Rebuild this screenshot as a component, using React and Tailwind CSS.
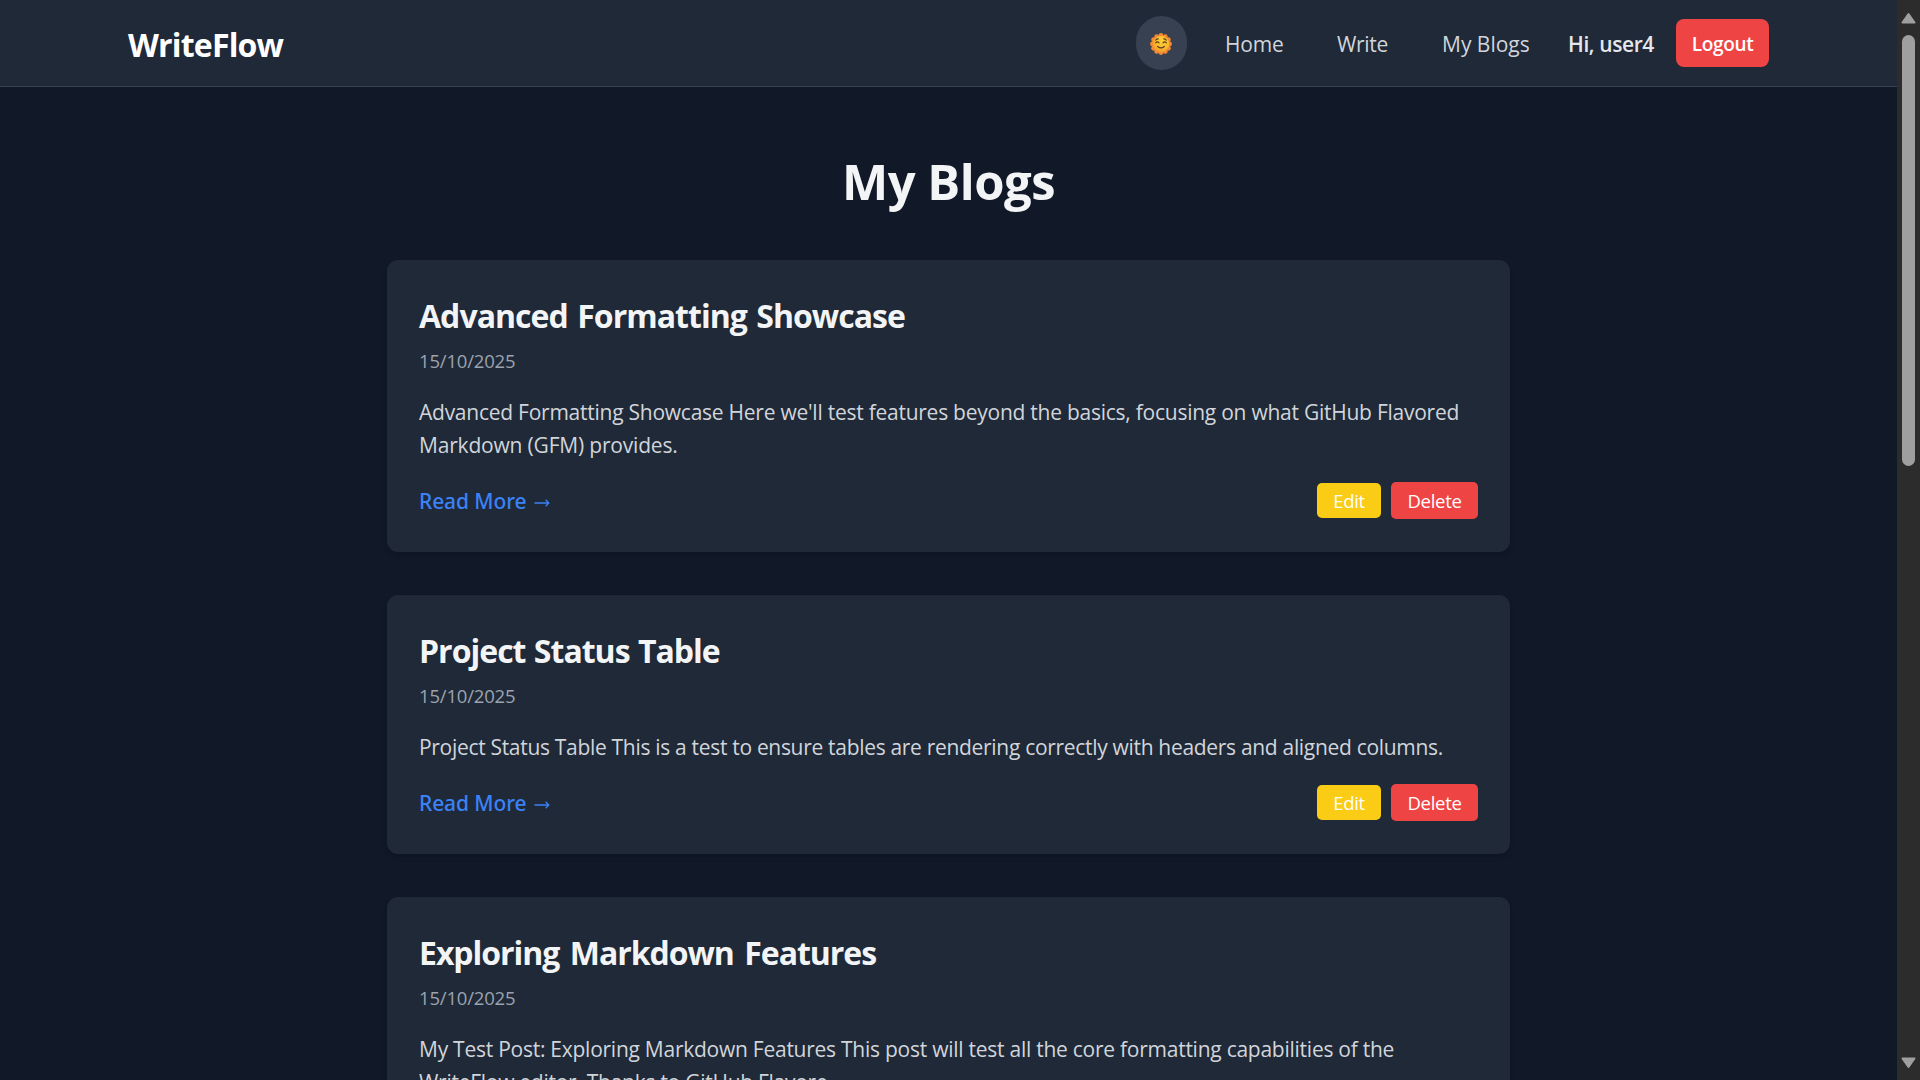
const posts = [
  {
    title: "Advanced Formatting Showcase",
    titleClass: "tracking-[-0.96px] [word-spacing:2px]",
    date: "15/10/2025",
    lines: [
      {
        text: "Advanced Formatting Showcase Here we'll test features beyond the basics, focusing on what GitHub Flavored",
        cls: "tracking-[-0.249px]",
      },
      { text: "Markdown (GFM) provides.", cls: "tracking-[-0.19px]" },
    ],
  },
  {
    title: "Project Status Table",
    titleClass: "tracking-[-0.99px] [word-spacing:1px]",
    date: "15/10/2025",
    lines: [
      {
        text: "Project Status Table This is a test to ensure tables are rendering correctly with headers and aligned columns.",
        cls: "tracking-[-0.31px]",
      },
    ],
  },
  {
    title: "Exploring Markdown Features",
    titleClass: "tracking-[-1.04px] [word-spacing:3.2px]",
    date: "15/10/2025",
    lines: [
      {
        text: "My Test Post: Exploring Markdown Features This post will test all the core formatting capabilities of the",
        cls: "tracking-[-0.254px]",
      },
      { text: "WriteFlow editor. Thanks to GitHub Flavore...", cls: "tracking-[-0.27px]" },
    ],
  },
];

const petals = Array.from({ length: 12 }, (_, i) => {
  const a = (i * Math.PI) / 6;
  return [16 + 12.4 * Math.cos(a), 16 + 12.4 * Math.sin(a)];
});

function SunIcon() {
  return (
    <svg viewBox="0 0 32 32" className="h-[22px] w-[22px]" aria-hidden="true">
      <defs>
        <radialGradient id="sunFace" cx="0.6" cy="0.3" r="0.75">
          <stop offset="0" stopColor="#ffd43a" />
          <stop offset="0.6" stopColor="#f9bb2c" />
          <stop offset="1" stopColor="#ee9a2c" />
        </radialGradient>
      </defs>
      <g fill="#f58a32">
        <circle cx="16" cy="16" r="13.2" />
        {petals.map(([x, y]) => (
          <circle key={`${x}-${y}`} cx={x} cy={y} r="3.5" />
        ))}
      </g>
      <circle cx="16" cy="16" r="11.8" fill="url(#sunFace)" />
      <g fill="none" stroke="#5c3d22" strokeWidth="1.7" strokeLinecap="round">
        <path d="M8.3 10.3 Q9.8 8.4 12 8.6" />
        <path d="M20 8.6 Q22.2 8.4 23.7 10.3" />
        <path d="M8.2 14.4 Q10.7 11.6 13.2 14.4" />
        <path d="M18.8 14.4 Q21.3 11.6 23.8 14.4" />
        <path d="M11.2 19.6 Q16 23.8 20.8 19.6" />
      </g>
    </svg>
  );
}

function Header() {
  return (
    <header className="flex h-[87px] shrink-0 items-center justify-between border-b border-[#374151] bg-[#1f2937] px-32">
      <span className="pt-[4px] text-[32px] leading-[44px] font-bold tracking-[-0.82px] whitespace-nowrap text-white">
        WriteFlow
      </span>
      <nav className="flex items-center text-[21px] leading-[33px] whitespace-nowrap text-[#d1d5db]">
        <button className="mr-[38px] flex h-[54px] w-[51px] items-center justify-center rounded-full bg-[#374151]">
          <span className="pt-[2px] pr-px">
            <SunIcon />
          </span>
        </button>
        <a className="w-[112px] pt-[2px] tracking-[-0.15px]">Home</a>
        <a className="w-[105px] pt-[2px] tracking-[-0.31px]">Write</a>
        <a className="w-[126px] pt-[2px]">My Blogs</a>
        <span className="w-[108px] pt-[2px] font-semibold tracking-[-0.4px] text-[#e5e7eb]">
          Hi, user4
        </span>
        <button className="h-[48px] w-[93px] rounded-lg bg-[#ef4444] pt-[3px] text-[19px] font-semibold tracking-[-0.32px] text-white">
          Logout
        </button>
      </nav>
    </header>
  );
}

function PostCard({ post }) {
  return (
    <article className="rounded-[11px] bg-[#1f2937] px-8 pt-[34px] pb-[33px] shadow-md">
      <h2 className={`text-[32px] leading-[44px] font-bold whitespace-nowrap text-[#f3f4f6] ${post.titleClass}`}>
        {post.title}
      </h2>
      <div className="mt-[9px] text-[18.5px] leading-[28px] tracking-[-0.18px] text-[#9ca3af]">
        {post.date}
      </div>
      <p className="mt-[21px] text-[21px] leading-[33px] whitespace-nowrap text-[#d1d5db]">
        {post.lines.map((line) => (
          <span key={line.text} className={`block ${line.cls}`}>
            {line.text}
          </span>
        ))}
      </p>
      <div className="mt-[20px] flex h-[37px] items-center justify-between">
        <a className="flex items-center pt-[2px] font-['Noto_Sans',sans-serif] text-[21px] leading-[33px] font-medium tracking-[-0.11px] text-[#3b82f6]">
          Read More
          <svg viewBox="0 0 16 10" className="mt-[3px] ml-[8px] h-[10px] w-[16px]" aria-hidden="true">
            <path d="M0.5 5H14.5M11.6 1.8L14.8 5L11.6 8.2" fill="none" stroke="#3b82f6" strokeWidth="1.3" />
          </svg>
        </a>
        <div className="flex items-center gap-[10px] text-[18.5px] leading-[28px] tracking-[-0.3px] text-white">
          <button className="h-[35px] w-[64px] rounded-[5px] bg-[#facc15]">Edit</button>
          <button className="h-[37px] w-[87px] rounded-[5px] bg-[#ef4444]">Delete</button>
        </div>
      </div>
    </article>
  );
}

function Scrollbar() {
  return (
    <div className="flex w-[23px] shrink-0 flex-col items-center bg-[#2c2c2c] pt-[12px] pr-px pb-[11px]">
      <svg viewBox="0 0 15 12" className="h-[12px] w-[15px]" aria-hidden="true">
        <path d="M7.5 2L13.5 10.6H1.5Z" fill="#9f9f9f" stroke="#9f9f9f" strokeWidth="2" strokeLinejoin="round" />
      </svg>
      <div className="mt-[11px] h-[431px] w-[13px] rounded-full bg-[#9f9f9f]" />
      <svg viewBox="0 0 15 12" className="mt-auto h-[12px] w-[15px]" aria-hidden="true">
        <path d="M7.5 10L13.5 1.4H1.5Z" fill="#9f9f9f" stroke="#9f9f9f" strokeWidth="2" strokeLinejoin="round" />
      </svg>
    </div>
  );
}

export default function App() {
  return (
    <div className="flex h-[1080px] w-[1920px] overflow-hidden bg-[#111827] font-['Open_Sans','Noto_Sans',sans-serif]">
      <div className="flex min-w-0 flex-1 flex-col overflow-hidden">
        <Header />
        <main className="mx-auto w-[1123px] pt-[67px]">
          <h1 className="mb-[51px] text-center text-[49px] leading-[55px] font-bold tracking-[-0.5px] text-[#f3f4f6]">
            My Blogs
          </h1>
          <div className="flex flex-col gap-[43px]">
            {posts.map((post) => (
              <PostCard key={post.title} post={post} />
            ))}
          </div>
        </main>
      </div>
      <Scrollbar />
    </div>
  );
}
